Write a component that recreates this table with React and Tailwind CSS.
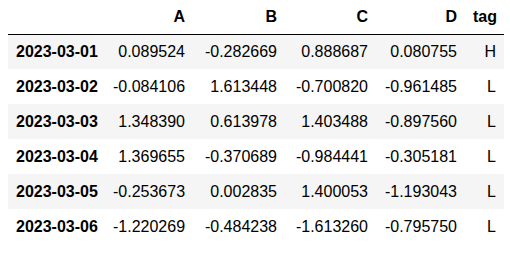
import React from 'react';

// 数据表 - 类似 pandas DataFrame 渲染样式
const columns = ['A', 'B', 'C', 'D', 'tag'];

const rows = [
  ['2023-03-01', '0.089524', '-0.282669', '0.888687', '0.080755', 'H'],
  ['2023-03-02', '-0.084106', '1.613448', '-0.700820', '-0.961485', 'L'],
  ['2023-03-03', '1.348390', '0.613978', '1.403488', '-0.897560', 'L'],
  ['2023-03-04', '1.369655', '-0.370689', '-0.984441', '-0.305181', 'L'],
  ['2023-03-05', '-0.253673', '0.002835', '1.400053', '-1.193043', 'L'],
  ['2023-03-06', '-1.220269', '-0.484238', '-1.613260', '-0.795750', 'L'],
];

export default function App() {
  return (
    <div className="w-[510px] h-[253px] bg-white overflow-hidden font-['Liberation_Sans',Arial,sans-serif] text-[16px] text-black">
      <table className="ml-2 table-fixed border-collapse w-[496px]">
        <colgroup>
          <col className="w-[97px]" />
          <col className="w-[88px]" />
          <col className="w-[92px]" />
          <col className="w-[91px]" />
          <col className="w-[89px]" />
          <col className="w-[39px]" />
        </colgroup>
        <thead>
          <tr className="h-[34px] border-b border-black">
            <th className="px-2"></th>
            {columns.map((c) => (
              <th key={c} className="px-2 text-right font-bold align-middle">
                {c}
              </th>
            ))}
          </tr>
        </thead>
        <tbody>
          {rows.map((r, i) => (
            <tr key={r[0]} className={`h-[35px] ${i % 2 === 0 ? 'bg-[#f5f5f5]' : 'bg-white'}`}>
              <th className="px-2 text-right font-bold whitespace-nowrap align-middle">{r[0]}</th>
              {r.slice(1).map((v, j) => (
                <td key={j} className="px-2 text-right whitespace-nowrap align-middle">
                  {v}
                </td>
              ))}
            </tr>
          ))}
        </tbody>
      </table>
    </div>
  );
}
